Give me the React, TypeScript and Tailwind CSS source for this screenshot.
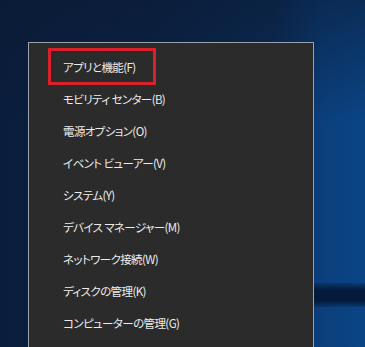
import React from "react";

const items = [
  "アプリと機能(F)",
  "モビリティ センター(B)",
  "電源オプション(O)",
  "イベント ビューアー(V)",
  "システム(Y)",
  "デバイス マネージャー(M)",
  "ネットワーク接続(W)",
  "ディスクの管理(K)",
  "コンピューターの管理(G)",
];

export default function App() {
  return (
    <div className="relative h-[347px] w-[365px] overflow-hidden bg-[linear-gradient(90deg,#0a1d3c_0%,#0b2244_40%,#0c2d58_75%,#0b3f7c_88%,#0a4585_100%)]">
      {/* desktop light streaks */}
      <div className="pointer-events-none absolute inset-0 bg-[linear-gradient(180deg,rgba(10,25,50,0.55)_0%,rgba(10,25,50,0)_35%)]" />
      <div className="pointer-events-none absolute right-0 top-[283px] h-[24px] w-[60px] bg-[linear-gradient(180deg,rgba(4,20,45,0.2),#041a3a_30%,#041a3a_75%,rgba(4,20,45,0.2))]" />

      <div className="relative pl-[28px] pt-[42px]">
        <div
          className="h-[320px] w-[286px] border border-[#9aa1a8] bg-[#2b2b2b] pt-[9px] text-[11.5px] tracking-[-0.6px] text-[#ececec]"
          style={{
            fontFamily: '"Noto Sans CJK JP", "Noto Sans", sans-serif',
            fontFeatureSettings: '"palt"',
          }}
        >
          {items.map((label, i) => (
            <div key={label} className="relative flex h-[32px] items-center pl-[34px]">
              {i === 0 && (
                <span className="absolute left-[19px] top-[-4px] h-[37px] w-[108px] border-[3px] border-[#d9202b]" />
              )}
              <span className="relative">{label}</span>
            </div>
          ))}
        </div>
      </div>
    </div>
  );
}
